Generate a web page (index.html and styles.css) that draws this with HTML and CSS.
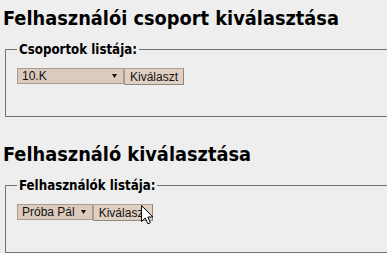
FILE: index.html
```html
<!DOCTYPE html>
<html lang="hu">
<head>
<meta charset="utf-8">
<title>Kiválasztás</title>
<link rel="stylesheet" href="styles.css">
</head>
<body>
<h1 class="title title-first">Felhasználói csoport kiválasztása</h1>
<fieldset class="box">
  <legend class="box-legend">Csoportok listája:</legend>
  <div class="row">
    <span class="select select-wide"><span class="select-text">10.K</span><svg class="arrow" width="5" height="4" viewBox="0 0 5 4"><path d="M0 0H5L2.5 4Z" fill="#111"/></svg></span><button class="btn" type="button">Kiválaszt</button>
  </div>
</fieldset>
<h1 class="title">Felhasználó kiválasztása</h1>
<fieldset class="box">
  <legend class="box-legend">Felhasználók listája:</legend>
  <div class="row">
    <span class="select"><span class="select-text">Próba Pál</span><svg class="arrow" width="5" height="4" viewBox="0 0 5 4"><path d="M0 0H5L2.5 4Z" fill="#111"/></svg></span><span class="btn-wrap"><button class="btn" type="button">Kiválaszt</button><svg class="cursor" width="13" height="20" viewBox="0 0 13 20"><path d="M0.5 0.5V16.5L4.3 12.9L6.8 18.8L9.3 17.8L6.9 12H11.8Z" fill="#fff" stroke="#000" stroke-width="1" stroke-linejoin="miter"/></svg></span>
  </div>
</fieldset>
</body>
</html>
```

FILE: styles.css
```css
html {
  background: #eeeeee;
  overflow: hidden;
}
body {
  margin: 0;
  padding: 0 0 0 3px;
  background: #eeeeee;
  color: #000;
}
.title {
  margin: 26px 0 0 0;
  font-family: "DejaVu Sans Condensed", "DejaVu Sans", sans-serif;
  font-stretch: condensed;
  font-weight: bold;
  font-size: 19.8px;
  line-height: 23px;
}
.title-first {
  margin-top: 7px;
}
.box {
  margin: 12px 0 0 2px;
  width: 500px;
  padding: 11px 0 31px 11px;
  border: 1px solid #727272;
  min-width: 0;
}
.box-legend {
  padding: 0 2px;
  font-family: "DejaVu Sans Condensed", "DejaVu Sans", sans-serif;
  font-stretch: condensed;
  font-weight: bold;
  font-size: 13.2px;
  line-height: 15px;
}
.row {
  display: flex;
  align-items: flex-start;
}
.select {
  display: flex;
  align-items: center;
  box-sizing: border-box;
  height: 16px;
  padding: 0 6px 0 4px;
  background: #dccbbc;
  border: 1px solid #a49c95;
  font-family: "Liberation Sans", Arial, sans-serif;
  font-size: 12px;
  color: #111;
}
.select-wide {
  width: 107px;
  justify-content: space-between;
}
.select-text {
  margin-right: 6px;
  line-height: 14px;
}
.arrow {
  display: block;
  flex: none;
}
.btn-wrap {
  position: relative;
  display: block;
}
.btn {
  display: block;
  box-sizing: border-box;
  height: 17px;
  margin: 0;
  padding: 0 5px;
  background: #e0d0c2;
  border: 1px solid #a8a19a;
  border-right-color: #8e8780;
  border-bottom-color: #8e8780;
  font-family: "Liberation Sans", Arial, sans-serif;
  font-size: 12px;
  line-height: 14px;
  color: #111;
}
.cursor {
  position: absolute;
  left: 48px;
  top: 1px;
}
```
